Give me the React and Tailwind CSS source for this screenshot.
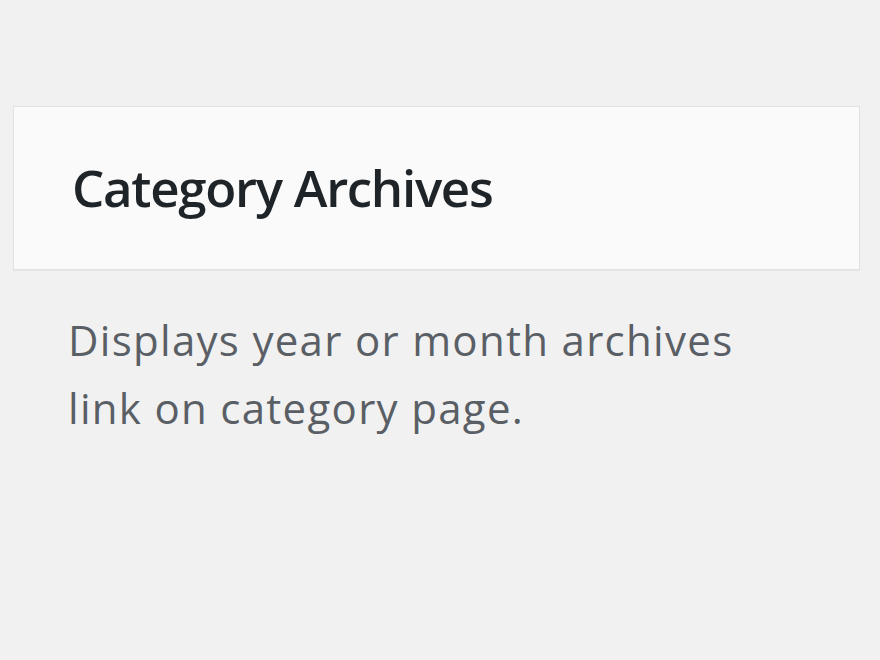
import React from 'react';

function App() {
  return (
    <div className="min-h-screen w-full bg-[#f1f1f1] pt-[106px] px-[13px] font-['Open_Sans',sans-serif]">
      <div className="w-[847px] h-[164px] bg-[#fafafa] border border-[#e2e2e2] shadow-[0_1px_1px_rgba(0,0,0,0.04)] flex items-center pl-[58px] pb-[2px]">
        <h3 className="text-[51px] font-semibold text-[#1f2428] tracking-[-1.3px] leading-none">Category Archives</h3>
      </div>
      <p className="mt-[36px] pl-[55px] text-[42px] leading-[68px] text-[#5a5f66] tracking-[1.3px] w-[760px]">
        Displays year or month archives link on category page.
      </p>
    </div>
  );
}

export default App;
